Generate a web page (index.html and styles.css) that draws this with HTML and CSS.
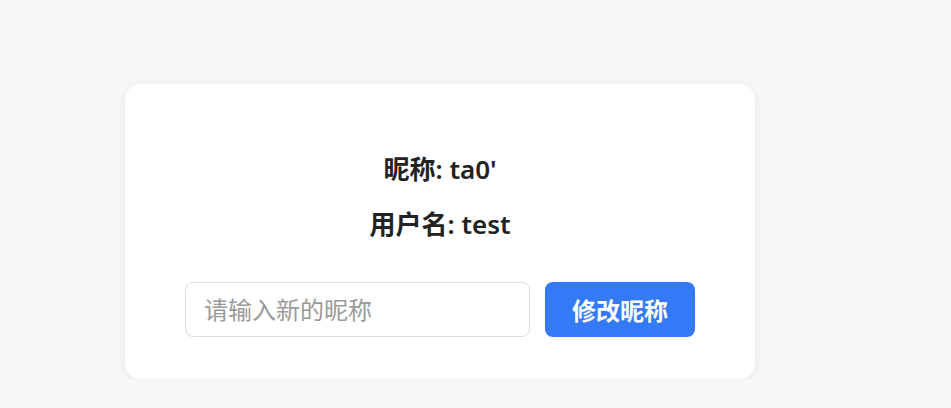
FILE: index.html
```html
<!doctype html>
<html lang="zh-CN">
<head>
    <meta charset="UTF-8">
    <title>个人信息</title>
    <link rel="stylesheet" href="styles.css">
</head>
<body>
    <main class="page">
        <div class="profile-card">
            <p class="info-line">昵称: ta0'</p>
            <p class="info-line">用户名: test</p>
            <form class="nick-form" action="">
                <input type="text" class="nick-input" placeholder="请输入新的昵称">
                <button type="button" class="nick-btn">修改昵称</button>
            </form>
        </div>
    </main>
</body>
</html>
```

FILE: styles.css
```css
* {
    margin: 0;
    padding: 0;
    box-sizing: border-box;
}

body {
    background: #f6f7f9;
    font-family: "Noto Sans", "Noto Sans CJK SC", sans-serif;
    color: #222;
}

.page {
    padding-top: 84px;
    padding-left: 125px;
}

.profile-card {
    width: 630px;
    height: 295px;
    padding-top: 67px;
    background: #fff;
    border-radius: 16px;
    box-shadow: 0 2px 12px rgba(0, 0, 0, 0.06);
}

.info-line {
    font-size: 26px;
    font-weight: 600;
    line-height: 36px;
    text-align: center;
    margin-bottom: 19px;
}

.nick-form {
    display: flex;
    justify-content: center;
    gap: 15px;
    margin-top: 40px;
}

.nick-input {
    width: 345px;
    height: 55px;
    padding: 0 18px;
    border: 1px solid #dcdde0;
    border-radius: 8px;
    font-size: 24px;
    font-family: inherit;
    outline: none;
    color: #333;
}

.nick-input::placeholder {
    color: #9a9a9a;
}

.nick-btn {
    width: 150px;
    height: 55px;
    border: none;
    border-radius: 8px;
    background: #3479f6;
    color: #fff;
    font-size: 24px;
    font-weight: 700;
    font-family: inherit;
}
```
